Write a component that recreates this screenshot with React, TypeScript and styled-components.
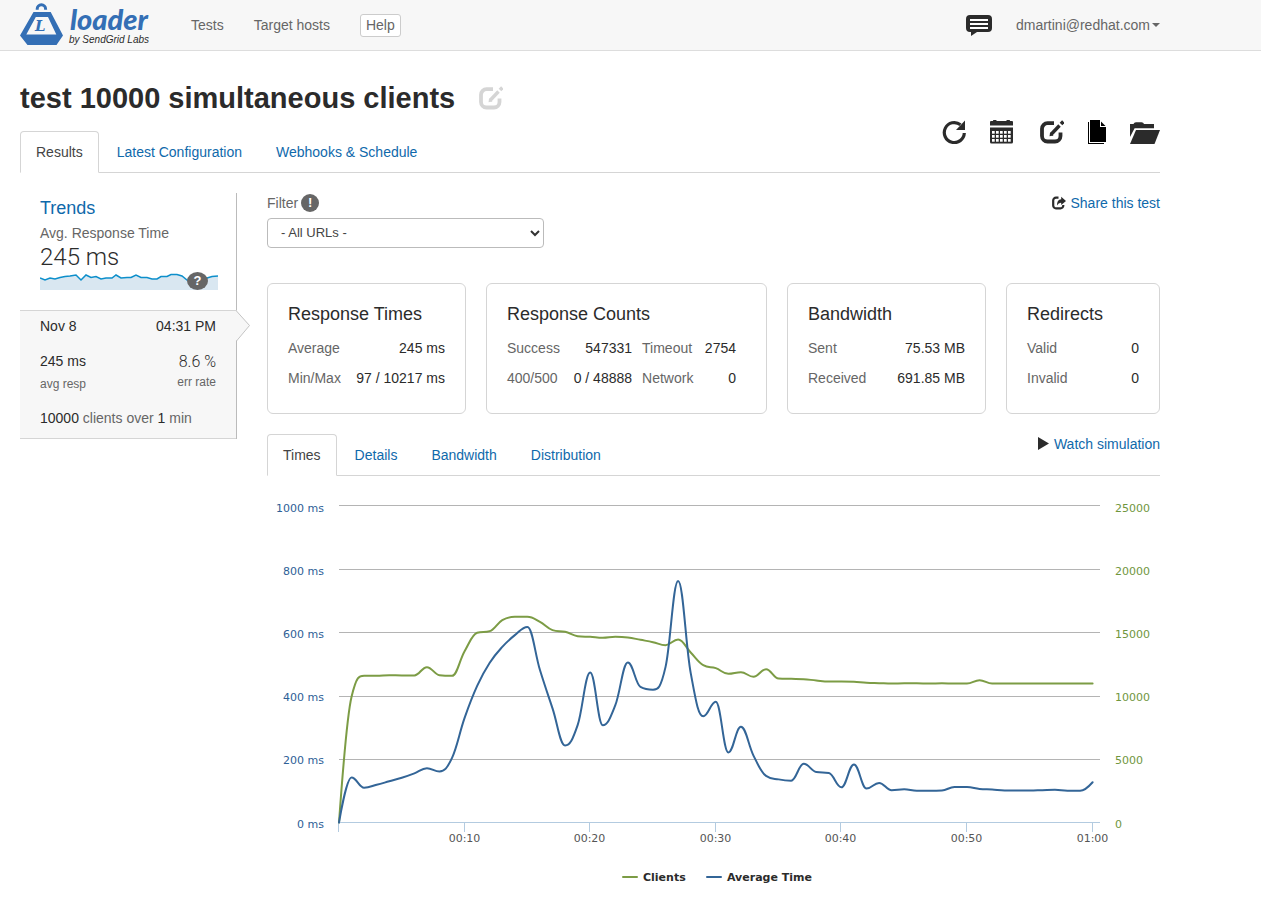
import React from 'react';
import styled, { createGlobalStyle } from 'styled-components';

const GlobalStyle = createGlobalStyle`
  *, *::before, *::after { box-sizing: border-box; }
  body {
    margin: 0;
    background: #fff;
    color: #666;
    font-family: "Helvetica Neue", "Liberation Sans", Arial, sans-serif;
    font-size: 14px;
    line-height: 20px;
  }
  h1, h2, p { margin: 0; }
  a { color: #0f69ab; text-decoration: none; }
  button { font: inherit; cursor: pointer; }
  svg { display: block; }
`;

const INK = '#2b2b2b';
const LINE = '#d5d5d5';

/* ---------- top bar ---------- */

const TopBar = styled.header`
  background: #f7f7f7;
  border-bottom: 1px solid #ddd;
`;

const Container = styled.div`
  max-width: 1180px;
  padding: 0 20px;
`;

const TopBarInner = styled(Container)`
  display: flex;
  align-items: center;
  height: 50px;
`;

const Brand = styled.a`
  display: flex;
  gap: 6px;
  width: 142px;
  height: 44px;
`;

const BrandText = styled.span`
  display: flex;
  flex-direction: column;
  white-space: nowrap;
`;

const BrandName = styled.span`
  color: #346fb5;
  font: italic 900 29px/32px Lato, "Open Sans", sans-serif;
  padding-left: 1px;
`;

const BrandBy = styled.span`
  color: ${INK};
  font-size: 10px;
  font-style: italic;
  line-height: 10px;
`;

const Nav = styled.nav`
  display: flex;
  align-items: center;
  gap: 30px;
  margin-left: 29px;
  flex: 1;
`;

const NavLink = styled.a`
  color: #666;
`;

const HelpButton = styled.button`
  height: 23px;
  padding: 0 5px;
  color: #666;
  line-height: 20px;
  background: #fff;
  border: 1px solid #ccc;
  border-radius: 3px;
`;

const IconButton = styled.button<{ $color?: string }>`
  display: flex;
  padding: 0;
  border: 0;
  background: none;
  color: ${(p) => p.$color ?? INK};
`;

const AccountButton = styled.button`
  display: flex;
  align-items: center;
  gap: 2px;
  margin-left: 24px;
  padding: 0;
  border: 0;
  background: none;
  color: #666;
`;

const Caret = styled.span`
  border: 4px solid transparent;
  border-top-color: #666;
  border-bottom-width: 0;
`;

/* ---------- page head ---------- */

const PageHead = styled.div`
  display: flex;
  justify-content: space-between;
  align-items: flex-end;
  margin-top: 27px;
  border-bottom: 1px solid ${LINE};
`;

const TitleRow = styled.div`
  display: flex;
  align-items: center;
  gap: 24px;
  margin-bottom: 13px;
`;

const Title = styled.h1`
  color: ${INK};
  font-size: 29px;
  font-weight: 700;
  line-height: 40px;
`;

const Toolbar = styled.div`
  display: flex;
  gap: 24px;
  padding-bottom: 28px;
`;

const Tabs = styled.nav`
  display: flex;
  gap: 2px;
  margin-bottom: -1px;
`;

const Tab = styled.a<{ $active?: boolean }>`
  padding: 10px 15px;
  color: ${(p) => (p.$active ? '#444' : '#0f69ab')};
  border: 1px solid ${(p) => (p.$active ? LINE : 'transparent')};
  border-bottom-color: ${(p) => (p.$active ? '#fff' : 'transparent')};
  border-radius: 4px 4px 0 0;
  white-space: nowrap;
`;

/* ---------- columns ---------- */

const Columns = styled.div`
  display: flex;
  align-items: flex-start;
  gap: 30px;
  margin-top: 20px;
`;

const Sidebar = styled.aside`
  flex: 0 0 217px;
  border-right: 1px solid #bbb;
`;

const Trends = styled.section`
  height: 117px;
  padding: 5px 18px 0 20px;
`;

const TrendsTitle = styled.h2`
  font-size: 18px;
  font-weight: 400;
  line-height: 20px;
  margin-bottom: 5px;
`;

const ThinValue = styled.p<{ $large?: boolean }>`
  color: ${INK};
  font-family: Roboto, "Liberation Sans", sans-serif;
  font-weight: 300;
  font-size: ${(p) => (p.$large ? 24 : 16)}px;
  line-height: ${(p) => (p.$large ? 28 : 24)}px;
`;

const SparkBox = styled.div`
  position: relative;
  margin-top: 1px;
`;

const Badge = styled.span<{ $wide?: boolean }>`
  display: inline-flex;
  align-items: center;
  justify-content: center;
  width: ${(p) => (p.$wide ? 21 : 18)}px;
  height: 18px;
  border-radius: 50%;
  background: #666;
  color: #fff;
  font-size: 13px;
  font-weight: 700;
  line-height: 18px;
`;

const SparkBadge = styled.div`
  position: absolute;
  right: 10px;
  top: 0;
  display: flex;
`;

const Run = styled.section`
  position: relative;
  height: 129px;
  padding: 5px 20px 0;
  background: #f7f7f7;
  border: solid ${LINE};
  border-width: 1px 0;
  color: ${INK};
`;

const RunArrow = styled.svg`
  position: absolute;
  left: 100%;
  top: -1px;
`;

const Between = styled.div`
  display: flex;
  justify-content: space-between;
`;

const RunStats = styled(Between)`
  margin: 14px 0 12px;
`;

const Stat = styled.div<{ $right?: boolean }>`
  text-align: ${(p) => (p.$right ? 'right' : 'left')};
`;

const StatValue = styled.p`
  line-height: 22px;
`;

const StatLabel = styled.p<{ $tight?: boolean }>`
  color: #666;
  font-size: 12px;
  line-height: ${(p) => (p.$tight ? 16 : 24)}px;
`;

const Muted = styled.span`
  color: #666;
`;

const Main = styled.main`
  flex: 1;
  min-width: 0;
`;

const FilterRow = styled(Between)`
  align-items: flex-start;
`;

const FilterLabel = styled.label`
  display: flex;
  align-items: center;
  gap: 3px;
  margin-bottom: 5px;
`;

const SelectWrap = styled.div`
  position: relative;
  width: 277px;
`;

const Select = styled.select`
  display: block;
  appearance: none;
  width: 100%;
  height: 30px;
  padding: 0 13px;
  color: #444;
  font: inherit;
  font-size: 13px;
  background: #fff;
  border: 1px solid #bbb;
  border-radius: 4px;
`;

const SelectArrow = styled.svg`
  position: absolute;
  right: 4px;
  top: 12px;
  pointer-events: none;
`;

const IconLink = styled.a`
  display: flex;
  align-items: center;
  gap: 5px;
  svg { color: ${INK}; }
`;

const Cards = styled.div`
  display: grid;
  grid-template-columns: 199fr 281fr 199fr 154fr;
  gap: 20px;
  margin: 35px 0 20px;
`;

const Card = styled.section`
  padding: 20px;
  border: 1px solid ${LINE};
  border-radius: 6px;
`;

const CardTitle = styled.h2`
  color: ${INK};
  font-size: 18px;
  font-weight: 400;
  line-height: 20px;
  margin-bottom: 9px;
`;

const StatTable = styled.table<{ $inset?: boolean }>`
  width: ${(p) => (p.$inset ? 'calc(100% - 10px)' : '100%')};
  border-collapse: collapse;
  white-space: nowrap;
  th, td { height: 30px; padding: 0; }
  th { font-weight: 400; text-align: left; }
  td { color: ${INK}; text-align: right; }
  td + th { padding-left: 10px; }
`;

const ChartHead = styled(Between)`
  border-bottom: 1px solid ${LINE};
`;

const ChartSvg = styled.svg`
  width: 100%;
  height: auto;
  font-family: "DejaVu Sans", sans-serif;
  font-size: 11px;
`;

/* ---------- icons ---------- */

const EditIcon = () => (
  <svg width="24" height="24" viewBox="0 0 24 24" fill="none" stroke="currentColor">
    <path d="M14 3.2H7.5A5.5 5.5 0 0 0 2 8.700V16A5.500 5.500 0 0 0 7.500 21.500H15A5.500 5.500 0 0 0 20.500 16V12.500" strokeWidth="3.800" />
    <path d="M11 14.500L19.500 5.500" strokeWidth="3.400" />
    <path d="M9.500 16.200l.7-4 3.300 3.200z" fill="currentColor" stroke="none" />
    <path d="M21 4.100L23.400 1.600" strokeWidth="3.600" />
  </svg>
);

const RefreshIcon = () => (
  <svg width="24" height="24" viewBox="0 0 24 24" fill="none">
    <path d="M22.300 13A10 10 0 1 1 18.500 4.700" stroke="currentColor" strokeWidth="3.200" />
    <path d="M23 .5v9.500h-9z" fill="currentColor" />
  </svg>
);

const CalendarIcon = () => (
  <svg width="26" height="24" viewBox="0 0 26 24" fill="currentColor">
    <path d="M0 2q0-1 1-1h2Q3.200-.8 4.800-.8T6.600 1h9.800Q16.600-.8 18.200-.8T20 1h2q1 0 1 1v3.500H0z" />
    <path d="M0 7.500h23V22q0 1.500-1.500 1.500h-20Q0 23.500 0 22z" />
    <g fill="#fff">
      {[11, 15, 19].map((y) =>
        [2, 6, 10, 14, 18].map((x) => <rect key={`${x}-${y}`} x={x} y={y} width="2.700" height="2.700" />),
      )}
    </g>
  </svg>
);

const CopyIcon = () => (
  <svg width="18" height="24" viewBox="0 0 18 24">
    <path d="M0 2h1v21h15v1H0z" fill="#000" />
    <path d="M2 0h10v7h6v15H2z" fill="#000" />
    <path d="M13 1.500L17.500 6H13z" fill="#000" />
  </svg>
);

const FolderIcon = () => (
  <svg width="30" height="24" viewBox="0 0 30 24" fill="currentColor">
    <path d="M0 17V4h3.500q.5-1.800 2.500-1.800h5.500Q13.500 2.200 14 4h10v4.200H4.600z" />
    <path d="M6 10h24l-5.500 14H0z" />
  </svg>
);

const CommentIcon = () => (
  <svg width="26" height="22" viewBox="0 0 26 22">
    <path d="M4 1h18q4 0 4 4v9q0 4-4 4H11l-6 4v-4H4q-4 0-4-4V5q0-4 4-4z" fill="currentColor" />
    <path d="M4 6h18M4 10h18M4 14h18" stroke="#fff" strokeWidth="1.800" />
  </svg>
);

const ShareIcon = () => (
  <svg width="14" height="14" viewBox="0 0 14 14" fill="none">
    <path d="M6.500 1.700H4A2.800 2.800 0 0 0 1.200 4.500V9.500A2.800 2.800 0 0 0 4 12.300H8.500A2.800 2.800 0 0 0 11.300 9.500V9" stroke="currentColor" strokeWidth="2.200" />
    <path d="M9.200.8L14 4.900 9.200 9V6.800Q6.500 6.600 5 9.500 4.800 3.500 9.200 3.200z" fill="currentColor" />
  </svg>
);

const PlayIcon = () => (
  <svg width="11" height="14" viewBox="0 0 11 14">
    <path d="M0 0v13l11-6.500z" fill="currentColor" />
  </svg>
);

const LogoMark = () => (
  <svg width="43" height="44" viewBox="0 0 43 44">
    <path d="M17.200 6.800V6a4.200 4.200 0 0 1 8.400 0v.8" fill="none" stroke="#346fb5" strokeWidth="3" />
    <path
      d="M13.500 9h17.200L43 32.500 36.500 42H7.500L0 32.500zM15.800 14L6.300 31.500h30L28 14z"
      fill="#346fb5"
      fillRule="evenodd"
    />
    <text x="15" y="28" fontFamily="DejaVu Serif" fontSize="15" fontWeight="700" fontStyle="italic" fill="#346fb5">L</text>
  </svg>
);

/* ---------- chart ---------- */

const avgTime = [
  0, 142, 110, 119, 130, 141, 155, 171, 161, 204, 330, 431, 504, 554, 591, 617, 481, 360, 243, 307,
  473, 307, 370, 505, 428, 419, 491, 762, 472, 335, 381, 221, 302, 211, 147, 136, 132, 185, 159, 156,
  111, 183, 107, 125, 102, 105, 100, 100, 101, 112, 112, 106, 104, 101, 101, 101, 102, 103, 100, 100,
  127,
];

const clients = [
  0, 9910, 11567, 11567, 11620, 11594, 11600, 12250, 11620, 11567, 13513, 14959, 15091, 15958, 16220,
  16220, 15827, 15170, 15038, 14696, 14643, 14565, 14643, 14590, 14407, 14223, 13986, 14433, 13408,
  12409, 12172, 11725, 11857, 11489, 12093, 11357, 11331, 11305, 11200, 11121, 11121, 11094, 11015,
  10989, 10963, 10980, 10980, 10963, 10980, 10963, 10963, 11226, 10963, 10963, 10963, 10963, 10963,
  10963, 10963, 10963, 10963,
];

const PLOT = { left: 72, right: 833, top: 29.5, bottom: 346.5, step: 12.56 };

type Point = [number, number];

function toPoints(values: number[], max: number): Point[] {
  const scale = (PLOT.bottom - PLOT.top) / max;
  return values.map((v, i) => [PLOT.left + i * PLOT.step, PLOT.bottom - v * scale]);
}

/* Spline whose control points never overshoot the neighbouring values. */
function spline(points: Point[]): string {
  let d = `M${points[0][0]} ${points[0][1]}`;
  let prevControl = points[0];
  for (let i = 1; i < points.length; i++) {
    const [x, y] = points[i];
    const last = points[i - 1];
    const next = points[i + 1];
    let left: Point = [x, y];
    let right: Point = [x, y];
    if (next) {
      left = [(1.5 * x + last[0]) / 2.5, (1.5 * y + last[1]) / 2.5];
      right = [(1.5 * x + next[0]) / 2.5, (1.5 * y + next[1]) / 2.5];
      const shift = ((right[1] - left[1]) * (right[0] - x)) / (right[0] - left[0]) + y - right[1];
      left[1] += shift;
      right[1] += shift;
      const lo = Math.min(last[1], y);
      const hi = Math.max(last[1], y);
      if (left[1] > hi || left[1] < lo) {
        left[1] = left[1] > hi ? hi : lo;
        right[1] = 2 * y - left[1];
      }
      const lo2 = Math.min(next[1], y);
      const hi2 = Math.max(next[1], y);
      if (right[1] > hi2 || right[1] < lo2) {
        right[1] = right[1] > hi2 ? hi2 : lo2;
        left[1] = 2 * y - right[1];
      }
    }
    d += `C${prevControl[0]} ${prevControl[1]} ${left[0]} ${left[1]} ${x} ${y}`;
    prevControl = right;
  }
  return d;
}

const gridSteps = [0, 1, 2, 3, 4, 5];
const timeLabels = ['', '00:10', '00:20', '00:30', '00:40', '00:50', '01:00'];

const TimesChart = () => (
  <ChartSvg viewBox="0 0 893 420" role="img" aria-label="Clients and average time">
    {gridSteps.map((n) => {
      const lineY = Math.round(346.4 - n * 63.4) + 0.5;
      const labelY = Math.round(351.6 - n * 63.2);
      return (
        <g key={n}>
          <path d={`M${PLOT.left} ${lineY}H${PLOT.right}`} stroke={n ? '#b4b4b4' : '#b3cbe0'} />
          <text x="57" y={labelY} textAnchor="end" fill="#2e6096">{`${n * 200} ms`}</text>
          <text x="848" y={labelY} fill="#6f963d">{n * 5000}</text>
        </g>
      );
    })}
    {timeLabels.map((label, i) => {
      const x = Math.round(PLOT.left + i * 10 * PLOT.step) - 0.5;
      return (
        <g key={i}>
          <path d={`M${x} 347V356`} stroke="#b3cbe0" />
          <text x={x} y="366" textAnchor="middle" fill="#555">{label}</text>
        </g>
      );
    })}
    <g fill="none" strokeWidth="2" strokeLinejoin="round" strokeLinecap="round">
      <path d={spline(toPoints(clients, 25000))} stroke="#7c9c45" />
      <path d={spline(toPoints(avgTime, 1000))} stroke="#336597" />
      <path d="M356 401H370" stroke="#7c9c45" />
      <path d="M440 401H454" stroke="#336597" />
    </g>
    <g fill={INK} fontWeight="700">
      <text x="376" y="405">Clients</text>
      <text x="460" y="405">Average Time</text>
    </g>
  </ChartSvg>
);

const SPARK =
  'M0 6L5 8 10 6 15 7 20 5.500 25 4.500 30 4 36 3 41 8 46 3 51 5.500 56 4.500 61 7 66 6 72 6 76 3 81 6 87 5.500 91 5.500 96 3 101 5.500 107 5.500 112 7 117 7 121 4.500 127 4.500 131 2.500 137 2.500 142 4 147 8 157 9 167 6 172 4.500 178 4';

const Sparkline = () => (
  <svg width="178" height="18" viewBox="0 0 178 18">
    <path d={`${SPARK}V18H0z`} fill="#d9e7f1" />
    <path d={SPARK} fill="none" stroke="#0d8fcb" strokeWidth="1.500" />
  </svg>
);

/* ---------- page ---------- */

type StatRow = [string, string][];

const cards: { title: string; rows: StatRow[]; inset?: boolean }[] = [
  { title: 'Response Times', rows: [[['Average', '245 ms']], [['Min/Max', '97 / 10217 ms']]] },
  {
    title: 'Response Counts',
    inset: true,
    rows: [
      [['Success', '547331'], ['Timeout', '2754']],
      [['400/500', '0 / 48888'], ['Network', '0']],
    ],
  },
  { title: 'Bandwidth', rows: [[['Sent', '75.53 MB']], [['Received', '691.85 MB']]] },
  { title: 'Redirects', rows: [[['Valid', '0']], [['Invalid', '0']]] },
];

export default function App() {
  return (
    <>
      <GlobalStyle />
      <TopBar>
        <TopBarInner>
          <Brand href="#">
            <LogoMark />
            <BrandText>
              <BrandName>loader</BrandName>
              <BrandBy>by SendGrid Labs</BrandBy>
            </BrandText>
          </Brand>
          <Nav>
            <NavLink href="#">Tests</NavLink>
            <NavLink href="#">Target hosts</NavLink>
            <HelpButton type="button">Help</HelpButton>
          </Nav>
          <IconButton type="button" aria-label="Messages"><CommentIcon /></IconButton>
          <AccountButton type="button">dmartini@redhat.com<Caret /></AccountButton>
        </TopBarInner>
      </TopBar>

      <Container>
        <PageHead>
          <div>
            <TitleRow>
              <Title>test 10000 simultaneous clients</Title>
              <IconButton type="button" aria-label="Rename test" $color="#d5d5d5"><EditIcon /></IconButton>
            </TitleRow>
            <Tabs>
              <Tab href="#" $active>Results</Tab>
              <Tab href="#">Latest Configuration</Tab>
              <Tab href="#">Webhooks &amp; Schedule</Tab>
            </Tabs>
          </div>
          <Toolbar>
            <IconButton type="button" aria-label="Run again"><RefreshIcon /></IconButton>
            <IconButton type="button" aria-label="Schedule"><CalendarIcon /></IconButton>
            <IconButton type="button" aria-label="Edit"><EditIcon /></IconButton>
            <IconButton type="button" aria-label="Copy"><CopyIcon /></IconButton>
            <IconButton type="button" aria-label="Archive"><FolderIcon /></IconButton>
          </Toolbar>
        </PageHead>

        <Columns>
          <Sidebar>
            <Trends>
              <TrendsTitle><a href="#">Trends</a></TrendsTitle>
              <p>Avg. Response Time</p>
              <ThinValue $large>245 ms</ThinValue>
              <SparkBox>
                <Sparkline />
                <SparkBadge><Badge $wide>?</Badge></SparkBadge>
              </SparkBox>
            </Trends>
            <Run>
              <RunArrow width="15" height="32" viewBox="0 0 15 32">
                <path d="M0 0L14 15.500 0 31z" fill="#f7f7f7" />
                <path d="M0 .5L13.500 15.500 .5 31" fill="none" stroke="#c4c4c4" />
              </RunArrow>
              <Between><span>Nov 8</span><span>04:31 PM</span></Between>
              <RunStats>
                <Stat>
                  <StatValue>245 ms</StatValue>
                  <StatLabel>avg resp</StatLabel>
                </Stat>
                <Stat $right>
                  <ThinValue>8.6 %</ThinValue>
                  <StatLabel $tight>err rate</StatLabel>
                </Stat>
              </RunStats>
              <p>10000 <Muted>clients over</Muted> 1 <Muted>min</Muted></p>
            </Run>
          </Sidebar>

          <Main>
            <FilterRow>
              <div>
                <FilterLabel htmlFor="filter">Filter <Badge>!</Badge></FilterLabel>
                <SelectWrap>
                  <Select id="filter"><option>- All URLs -</option></Select>
                  <SelectArrow width="10" height="7" viewBox="0 0 10 7">
                    <path d="M1 1l4 4 4-4" fill="none" stroke="#333" strokeWidth="2" />
                  </SelectArrow>
                </SelectWrap>
              </div>
              <IconLink href="#"><ShareIcon />Share this test</IconLink>
            </FilterRow>

            <Cards>
              {cards.map((card) => (
                <Card key={card.title}>
                  <CardTitle>{card.title}</CardTitle>
                  <StatTable $inset={card.inset}>
                    <tbody>
                      {card.rows.map((row) => (
                        <tr key={row[0][0]}>
                          {row.map(([label, value]) => (
                            <React.Fragment key={label}>
                              <th scope="row">{label}</th>
                              <td>{value}</td>
                            </React.Fragment>
                          ))}
                        </tr>
                      ))}
                    </tbody>
                  </StatTable>
                </Card>
              ))}
            </Cards>

            <ChartHead>
              <Tabs>
                <Tab href="#" $active>Times</Tab>
                <Tab href="#">Details</Tab>
                <Tab href="#">Bandwidth</Tab>
                <Tab href="#">Distribution</Tab>
              </Tabs>
              <div>
                <IconLink href="#"><PlayIcon />Watch simulation</IconLink>
              </div>
            </ChartHead>
            <TimesChart />
          </Main>
        </Columns>
      </Container>
    </>
  );
}
